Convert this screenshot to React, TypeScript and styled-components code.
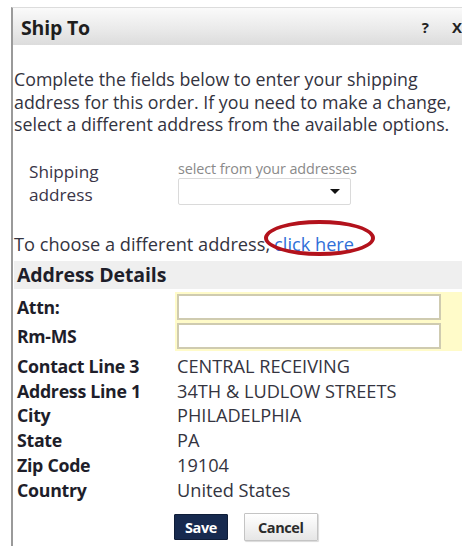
import React, { FC } from 'react'
import styled, { createGlobalStyle } from 'styled-components'

const GlobalStyle = createGlobalStyle`
    html, body {
        margin: 0;
        padding: 0;
        background: #ffffff;
        overflow: hidden;
    }
    body {
        font-family: "Open Sans", "Noto Sans", Arial, sans-serif;
        color: #2e2e33;
    }
`

const Page = styled.div`
    width: 462px;
    height: 546px;
    padding: 7px 0 0 11px;
    box-sizing: border-box;
    overflow: hidden;
`

const Dialog = styled.div`
    width: 480px;
    height: 560px;
    border-top: 1px solid #dcdcdc;
    border-left: 2px solid #9a9a9a;
    background: #ffffff;
`

const TitleBar = styled.div`
    display: flex;
    align-items: center;
    height: 37px;
    padding: 1px 0 0 8px;
    box-sizing: border-box;
    background: linear-gradient(#fafafa, #e9e9e9 60%, #dcdcdc);
`

const Title = styled.div`
    flex: 1;
    font-size: 19.5px;
    font-weight: 700;
    color: #1e1e1e;
    letter-spacing: -0.2px;
`

const TitleButton = styled.span<{ gap: number }>`
    font-size: 15px;
    font-weight: 700;
    color: #222;
    margin-right: ${props => props.gap}px;
`

const Body = styled.div`
    padding: 23px 0 0 1px;
`

const Intro = styled.p`
    margin: 0;
    white-space: nowrap;
    font-size: 17.8px;
    line-height: 22.5px;
    color: #333340;
`

const ShippingRow = styled.div`
    display: flex;
    margin-top: 24px;
`

const ShippingLabel = styled.div`
    width: 149px;
    padding-left: 15px;
    font-size: 17.2px;
    line-height: 23px;
    color: #3a3548;
`

const SelectColumn = styled.div`
    display: flex;
    flex-direction: column;
`

const Hint = styled.div`
    font-size: 14.4px;
    line-height: 14px;
    color: #8a8a8a;
    margin-top: 2px;
    letter-spacing: -0.1px;
`

const SelectBox = styled.div`
    display: flex;
    align-items: center;
    justify-content: flex-end;
    width: 173px;
    height: 27px;
    box-sizing: border-box;
    margin-top: 2px;
    padding-right: 10px;
    border: 1px solid #dadada;
    border-radius: 2px;
    background: #fff;
`

const Caret = styled.span`
    width: 0;
    height: 0;
    border-left: 5px solid transparent;
    border-right: 5px solid transparent;
    border-top: 5px solid #111;
`

const ChooseLine = styled.div`
    margin-top: 27px;
    font-size: 18.2px;
    line-height: 22px;
    color: #333340;
    white-space: nowrap;
`

const Circled = styled.span`
    position: relative;
    color: #2f6fd8;
    margin-left: 4px;

    &::after {
        content: '';
        position: absolute;
        left: -10px;
        top: -12px;
        width: 103px;
        height: 28px;
        border: 4px solid #b3121c;
        border-radius: 50%;
    }
`

const SectionHeader = styled.div`
    margin-top: 6px;
    height: 28px;
    display: flex;
    align-items: center;
    padding-left: 3px;
    background: #efefef;
    font-size: 19.5px;
    font-weight: 700;
    color: #1e1e2a;
    letter-spacing: -0.1px;
`

const EditBlock = styled.div`
    display: flex;
    margin-top: 3px;
`

const EditLabels = styled.div`
    width: 158px;
    padding-left: 3px;
    display: flex;
    flex-direction: column;
    gap: 3px;
    padding-top: 2px;
`

const EditFields = styled.div`
    flex: 1;
    display: flex;
    flex-direction: column;
    gap: 3px;
    padding: 2px 0 2px 2px;
    background: #fffbc9;
`

const FieldLabel = styled.div`
    height: 26px;
    line-height: 26px;
    font-size: 17.6px;
    font-weight: 700;
    color: #1e1e2a;
    letter-spacing: -0.3px;
`

const TextInput = styled.div`
    width: 264px;
    height: 26px;
    box-sizing: border-box;
    border: 2px solid #cfcbb0;
    background: #ffffff;
`

const DetailGrid = styled.div`
    display: grid;
    grid-template-columns: 160px 1fr;
    grid-auto-rows: 24.8px;
    align-items: center;
    margin-top: 3px;
    padding-left: 3px;
`

const DetailLabel = styled.div`
    font-size: 17.8px;
    font-weight: 700;
    color: #1e1e2a;
    letter-spacing: -0.3px;
`

const DetailValue = styled.div`
    font-size: 18.2px;
    color: #343440;
    white-space: nowrap;
`

const Buttons = styled.div`
    display: flex;
    align-items: center;
    gap: 16px;
    margin-top: 11px;
    padding-left: 160px;
`

const Button = styled.button<{ primary?: boolean }>`
    height: ${props => props.primary ? '26px' : '28px'};
    padding: 0 ${props => props.primary ? '10px' : '13px'};
    font-family: inherit;
    font-size: 14.5px;
    font-weight: 700;
    letter-spacing: -0.4px;
    border-radius: 1px;
    color: ${props => props.primary ? '#ffffff' : '#2b2b2b'};
    background: ${props => props.primary ? '#172a4f' : 'linear-gradient(#ffffff, #e6e6e6)'};
    border: 1px solid ${props => props.primary ? '#0f1d38' : '#c4c4c4'};
    box-shadow: ${props => props.primary ? 'none' : '1px 1px 1px rgba(0,0,0,0.15)'};
`

const details = [
	['Contact Line 3', 'CENTRAL RECEIVING'],
	['Address Line 1', '34TH & LUDLOW STREETS'],
	['City', 'PHILADELPHIA'],
	['State', 'PA'],
	['Zip Code', '19104'],
	['Country', 'United States'],
]

const App: FC = () => {
	return (
		<Page>
			<GlobalStyle />
			<Dialog>
				<TitleBar>
					<Title>Ship To</Title>
					<TitleButton gap={23}>?</TitleButton>
					<TitleButton gap={31}>X</TitleButton>
				</TitleBar>
				<Body>
					<Intro>
						Complete the fields below to enter your shipping<br />
						address for this order. If you need to make a change,<br />
						select a different address from the available options.
					</Intro>
					{/* Saved address picker */}
					<ShippingRow>
						<ShippingLabel>Shipping<br />address</ShippingLabel>
						<SelectColumn>
							<Hint>select from your addresses</Hint>
							<SelectBox><Caret /></SelectBox>
						</SelectColumn>
					</ShippingRow>
					<ChooseLine>
						To choose a different address,<Circled>click here</Circled>
					</ChooseLine>
					<SectionHeader>Address Details</SectionHeader>
					{/* Editable lines */}
					<EditBlock>
						<EditLabels>
							<FieldLabel>Attn:</FieldLabel>
							<FieldLabel>Rm-MS</FieldLabel>
						</EditLabels>
						<EditFields>
							<TextInput />
							<TextInput />
						</EditFields>
					</EditBlock>
					<DetailGrid>
						{details.map(([label, value]) => (
							<React.Fragment key={label}>
								<DetailLabel>{label}</DetailLabel>
								<DetailValue>{value}</DetailValue>
							</React.Fragment>
						))}
					</DetailGrid>
					<Buttons>
						<Button primary>Save</Button>
						<Button>Cancel</Button>
					</Buttons>
				</Body>
			</Dialog>
		</Page>
	)
}

export default App
